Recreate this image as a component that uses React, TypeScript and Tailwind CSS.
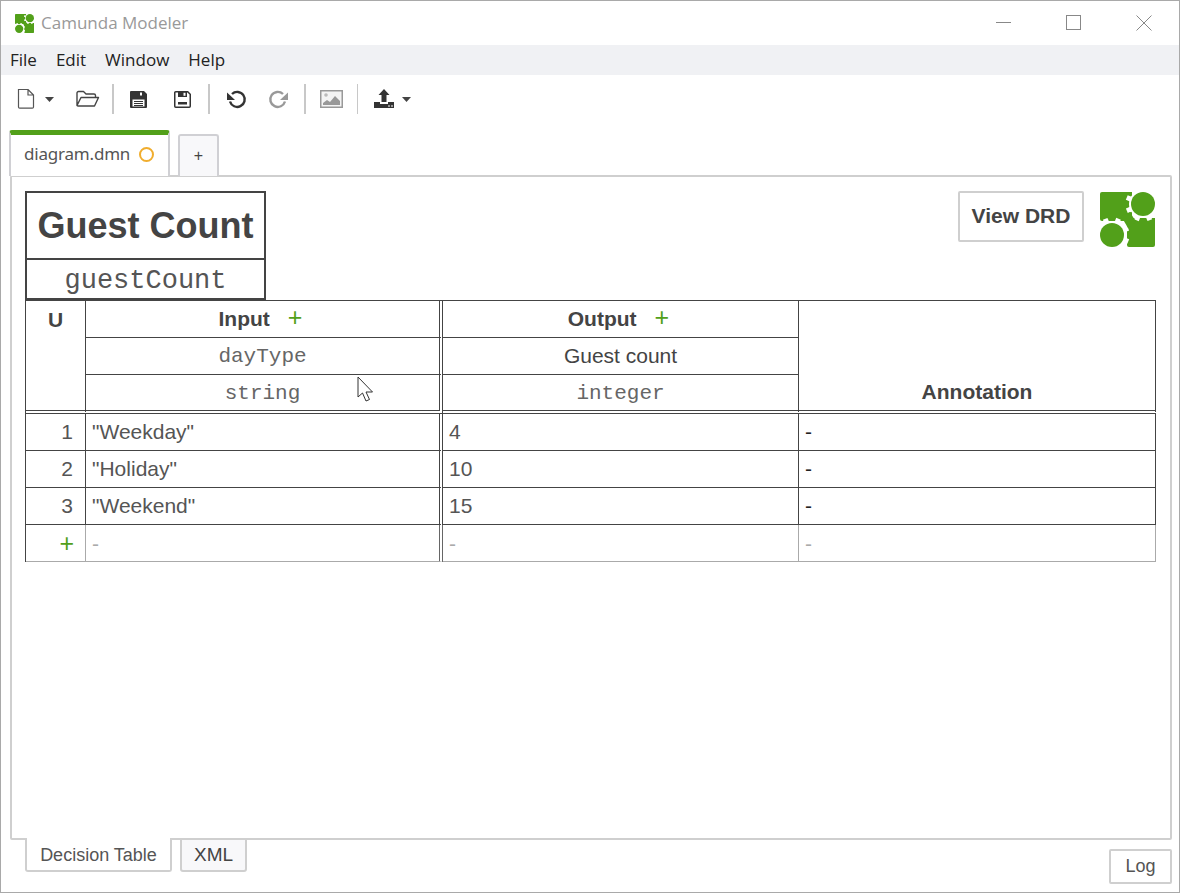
import React from "react";

const ui = "font-['Open_Sans','Noto_Sans',sans-serif]";
const ar = "font-['Liberation_Sans',Arial,sans-serif]";
const mono = "font-['Liberation_Mono','Courier_New',monospace]";

function Logo({ size }: { size: number }) {
  const gear = (cx: number, cy: number) => (
    <g fill="#fff">
      <circle cx={cx} cy={cy} r={14} />
      {[22, 67, 112, 157, 202, 247, 292, 337].map((a) => (
        <rect key={a} x={cx - 2.500} y={cy - 17.500} width={5} height={5} transform={`rotate(${a} ${cx} ${cy})`} />
      ))}
    </g>
  );
  return (
    <svg width={size} height={size} viewBox="0 0 55 55" className="shrink-0">
      <path d="M2 0H32V29H2a2 2 0 0 1-2-2V2a2 2 0 0 1 2-2Z" fill="#52a01a" />
      <path d="M27 26H55V53a2 2 0 0 1-2 2H29a2 2 0 0 1-2-2Z" fill="#52a01a" />
      {gear(43, 12)}
      {gear(12, 43)}
      <path d="M21 24 30 20 36 30 28 36Z" fill="#52a01a" />
      <circle cx="43" cy="12" r="12" fill="#52a01a" />
      <circle cx="12" cy="43" r="12" fill="#52a01a" />
    </svg>
  );
}

function Caret() {
  return (
    <svg width="9" height="5" viewBox="0 0 9 5"><path d="M0 0h9L4.500 5Z" fill="#444" /></svg>
  );
}

function Sep() {
  return <div className="w-[2px] h-[30px] bg-[#c8c8c8]" />;
}

function SaveFull() {
  return (
    <svg width="17" height="17" viewBox="0 0 17 17">
      <path d="M1 0H14L17 3V16a1 1 0 0 1-1 1H1a1 1 0 0 1-1-1V1a1 1 0 0 1 1-1Z" fill="#333" />
      <rect x="10" y="1.500" width="2" height="3" fill="#fff" />
      <rect x="2.500" y="8.500" width="12" height="7" fill="#fff" />
      <path d="M4 10.500h9M4 12.500h9M4 14.500h9" stroke="#333" />
    </svg>
  );
}

function SaveOutline() {
  return (
    <svg width="17" height="17" viewBox="0 0 17 17">
      <path d="M1.750.750H13.700L16.250 3.300V15.250a1 1 0 0 1-1 1H1.750a1 1 0 0 1-1-1V1.750a1 1 0 0 1 1-1Z" fill="#fff" stroke="#333" strokeWidth="1.500" />
      <rect x="4" y="1" width="9" height="5" fill="#333" />
      <rect x="9.500" y="1.800" width="2" height="3" fill="#fff" />
      <rect x="4" y="11" width="9" height="2.500" fill="#333" />
    </svg>
  );
}

function Tool({ children, className = "" }: { children: React.ReactNode; className?: string }) {
  return <div className={`flex items-center justify-center ${className}`}>{children}</div>;
}

const td = "border-r border-b border-[#444] p-0 h-[37px] text-[21px] leading-none";
const light = "border-r border-b border-[#aaa] p-0 h-[37px] text-[21px] leading-none";

export default function App() {
  return (
    <div className={`w-[1180px] h-[893px] bg-white flex flex-col border border-[#a9a9a9] overflow-hidden relative text-[#444] ${ar}`}>
      {/* Title bar */}
      <div className="h-[44px] flex items-center shrink-0">
        <div className="ml-[14px] mr-[7px]"><Logo size={19} /></div>
        <span className={`text-[17px] text-[#999] ${ui}`}>Camunda Modeler</span>
        <div className="ml-auto flex items-center">
          <svg width="16" height="16" viewBox="0 0 16 16" className="mr-[54px]"><path d="M0 7.500h15" stroke="#888" /></svg>
          <svg width="16" height="16" viewBox="0 0 16 16" className="mr-[54px]"><rect x=".5" y=".5" width="14" height="14" fill="none" stroke="#888" /></svg>
          <svg width="16" height="16" viewBox="0 0 16 16" className="mr-[27px]"><path d="M.5.500l15 15M15.500.500l-15 15" stroke="#888" /></svg>
        </div>
      </div>
      {/* Menu */}
      <div className={`h-[30px] bg-[#f0f1f4] flex items-center pl-[9px] gap-[19px] text-[17px] text-[#222] shrink-0 ${ui}`}>
        <span>File</span>
        <span>Edit</span>
        <span>Window</span>
        <span>Help</span>
      </div>
      {/* Toolbar */}
      <div className="h-[48px] flex items-center shrink-0 pl-[16px]">
        <Tool className="gap-[8px]">
          <svg width="20" height="20" viewBox="0 0 20 20">
            <path d="M2.500.500H12L17.500 6V18a1.200 1.200 0 0 1-1.200 1.200H3.700A1.200 1.200 0 0 1 2.500 18Z M12 .5V6H17.500" fill="none" stroke="#555" strokeWidth="1.200" transform="translate(-1 0)" />
          </svg>
          <Caret />
        </Tool>
        <Tool className="ml-[22px] mr-[12px]">
          <svg width="24" height="18" viewBox="0 0 24 18">
            <path d="M1 15V3a1.500 1.500 0 0 1 1.500-1.500h5L10 4h8a1.500 1.500 0 0 1 1.500 1.500V7 M1 15.500 5 7.500h17.500l-4 8.500H2a1 1 0 0 1-1-1Z" fill="none" stroke="#444" strokeWidth="1.400" strokeLinejoin="round" />
          </svg>
        </Tool>
        <Sep />
        <Tool className="ml-[16px]"><SaveFull /></Tool>
        <Tool className="ml-[27px] mr-[17px]"><SaveOutline /></Tool>
        <Sep />
        <Tool className="ml-[17px]">
          <svg width="20" height="20" viewBox="0 0 20 20">
            <path d="M5 5A7.500 7.500 0 1 1 3 12.500" fill="none" stroke="#333" strokeWidth="2.400" />
            <path d="M0 3.500 0 11H8Z" fill="#333" />
          </svg>
        </Tool>
        <Tool className="ml-[21px] mr-[16px]">
          <svg width="20" height="20" viewBox="0 0 20 20" className="-scale-x-100">
            <path d="M5 5A7.500 7.500 0 1 1 3 12.500" fill="none" stroke="#999" strokeWidth="2.400" />
            <path d="M0 3.500 0 11H8Z" fill="#999" />
          </svg>
        </Tool>
        <Sep />
        <Tool className="ml-[14px] mr-[14px]">
          <svg width="23" height="18" viewBox="0 0 23 18">
            <rect x=".75" y=".75" width="21.500" height="16.500" fill="#f4f4f4" stroke="#999" strokeWidth="1.500" />
            <path d="M3 15V13l4-3 3 2 5-6 5 5v4Z" fill="#999" />
            <circle cx="6" cy="5" r="1.800" fill="#bbb" />
          </svg>
        </Tool>
        <div className="w-[1px] h-[30px] bg-[#c8c8c8]" />
        <Tool className="ml-[16px] gap-[8px]">
          <svg width="20" height="20" viewBox="0 0 20 20">
            <path d="M10 0 15.500 6H12.500V13H7.500V6H4.500Z" fill="#333" />
            <path d="M0 13H6V15H14V13H20V19H0Z" fill="#333" />
            <path d="M14 17h2M17 17h2" stroke="#fff" />
          </svg>
          <Caret />
        </Tool>
      </div>
      {/* Tabs */}
      <div className="h-[53px] shrink-0 flex items-end pl-[8px] gap-[8px] relative z-10 -mb-[1px]">
        <div className="w-[161px] h-[46px] bg-white border-x-2 border-[#d0d0d4] border-t-[5px] border-t-[#52a01a] rounded-t-[3px] flex items-center pl-[13px] pb-[3px] text-[#555]">
          <span className="text-[17px] font-['Noto_Sans','Open_Sans',sans-serif] tracking-[-0.2px]">diagram.dmn</span>
          <span className="ml-[9px] w-[15px] h-[15px] rounded-full border-2 border-[#f0ad2e]" />
        </div>
        <div className="w-[41px] h-[42px] bg-[#f8f8fa] border-x-2 border-t-2 border-[#d0d0d4] rounded-t-[3px] flex items-center justify-center text-[16px] text-[#444]">+</div>
      </div>
      {/* Main panel */}
      <div className="ml-[9px] w-[1162px] h-[665px] shrink-0 border-2 border-[#cfcfcf] rounded-[2px] flex flex-col px-[13px] pt-[14px]">
        <div className="flex items-start justify-between">
          <div className="flex flex-col w-[241px]">
            <div className="h-[69px] border-2 border-[#444] flex items-center justify-center text-[36px] font-bold text-[#444] whitespace-nowrap">Guest Count</div>
            <div className={`h-[40px] pt-[4px] border-2 border-t-0 border-[#444] flex items-center justify-center text-[27px] text-[#555] ${mono}`}>guestCount</div>
          </div>
          <div className="flex items-start gap-[16px] pr-[2px]">
            <div className="w-[126px] h-[51px] pb-[2px] border-2 border-[#cfcfcf] rounded-[2px] flex items-center justify-center text-[21px] font-bold text-[#444]">View DRD</div>
            <div className="mt-[1px]"><Logo size={55} /></div>
          </div>
        </div>
        <table className="w-[1131px] table-fixed border-separate border-spacing-0 border-t border-l border-[#444]">
          <colgroup>
            <col className="w-[60px]" />
            <col className="w-[357px]" />
            <col className="w-[356px]" />
            <col />
          </colgroup>
          <tbody>
            <tr>
              <td rowSpan={3} className={`${td} border-b-[4px] border-double align-top text-center font-bold pt-[8px]`}>U</td>
              <td className={`${td} border-r-[4px] border-double text-center font-bold pb-[3px] pr-[4px]`}>
                Input<span className="ml-[18px] text-[#52a01a] font-normal text-[25px] leading-none">+</span>
              </td>
              <td className={`${td} text-center font-bold pb-[3px] pr-[4px]`}>
                Output<span className="ml-[18px] text-[#52a01a] font-normal text-[25px] leading-none">+</span>
              </td>
              <td rowSpan={3} className={`${td} border-b-[4px] border-double align-bottom text-center font-bold pb-[8px]`}>Annotation</td>
            </tr>
            <tr>
              <td className={`${td} border-r-[4px] border-double text-center text-[20.500px] text-[#666] ${mono}`}>dayType</td>
              <td className={`${td} text-center pb-[2px]`}>Guest count</td>
            </tr>
            <tr>
              <td className={`${td} h-[39px] pt-[2px] border-r-[4px] border-b-[4px] border-double text-center text-[20.500px] text-[#666] ${mono}`}>string</td>
              <td className={`${td} h-[39px] pt-[2px] border-b-[4px] border-double text-center text-[20.500px] text-[#666] ${mono}`}>integer</td>
            </tr>
            {[
              ["1", '"Weekday"', "4"],
              ["2", '"Holiday"', "10"],
              ["3", '"Weekend"', "15"],
            ].map(([n, a, b]) => (
              <tr key={n}>
                <td className={`${td} text-right pr-[12px] pb-[2px] text-[#555]`}>{n}</td>
                <td className={`${td} border-r-[4px] border-double pl-[6px] pb-[2px] text-[#555]`}>{a}</td>
                <td className={`${td} pl-[6px] pb-[2px] text-[#555]`}>{b}</td>
                <td className={`${td} pl-[6px] pb-[2px] text-[#222]`}>-</td>
              </tr>
            ))}
            <tr>
              <td className={`${light} text-right pr-[11px] text-[#52a01a] text-[25px]`}>+</td>
              <td className={`${light} border-r-[4px] border-r-[#666] border-double pl-[6px] text-[#aaa]`}>-</td>
              <td className={`${light} pl-[6px] text-[#aaa]`}>-</td>
              <td className={`${light} pl-[6px] text-[#aaa]`}>-</td>
            </tr>
          </tbody>
        </table>
        <svg width="20" height="28" viewBox="0 0 20 28" className="absolute left-[356px] top-[375px]">
          <path d="M1 1V21L5.500 17L9 25L12.500 23.500L9 16H15.500Z" fill="#fff" stroke="#333" strokeWidth="1" />
        </svg>
      </div>
      {/* Bottom tabs */}
      <div className="flex items-start pl-[24px] -mt-[2px] relative text-[18px] text-[#555] shrink-0">
        <div className="w-[147px] h-[34px] pt-[2px] bg-white border-x-2 border-b-2 border-[#cfcfcf] rounded-b-[3px] flex items-center justify-center">Decision Table</div>
        <div className="ml-[8px] w-[67px] h-[34px] bg-[#f8f8fa] border-x-2 border-b-2 border-t-2 border-[#cfcfcf] rounded-b-[3px] flex items-center justify-center text-[19px] text-[#444]">XML</div>
        <div className="ml-auto mr-[7px] mt-[11px] w-[63px] h-[35px] border-2 border-[#cfcfcf] rounded-[2px] flex items-center justify-center">Log</div>
      </div>
    </div>
  );
}
